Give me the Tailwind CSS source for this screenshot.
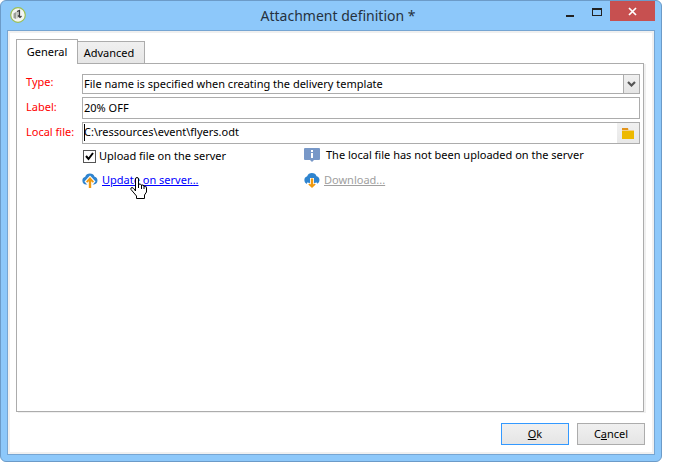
<!DOCTYPE html>
<html lang="en">
<head>
    <meta charset="UTF-8">
    <meta name="viewport" content="width=device-width, initial-scale=1.0">
    <title>Attachment definition</title>
    <script src="https://cdn.jsdelivr.net/npm/@tailwindcss/browser@4"></script>
</head>
<body class="flex flex-col min-h-screen bg-white pr-[18px] pb-[14px] font-['Noto_Sans',sans-serif] text-[11px] leading-4 text-black">
    <!-- Window -->
    <div class="flex flex-1 flex-col rounded-md border border-[#6c9bc8] bg-[#8dc8fa] px-[6px] pb-[6px]">
        <!-- Title bar -->
        <header class="relative flex h-[29px] items-start justify-between">
            <svg class="mt-[6px] ml-[3px] size-4" viewBox="0 0 16 16">
                <circle cx="8" cy="8" r="7.3" fill="#f4f6f2" stroke="#9cbf52" stroke-width="1.2"/>
                <path d="M3.500 6.500 6 5V12L3.500 11Z" fill="#9b9f98"/>
                <path d="M6 5 9 3.500V10L6.500 12Z" fill="#c3c6c0"/>
                <path d="M7 4.500 9.500 3.500V9.500M8 8.500 10 10.500 11.500 9" fill="none" stroke="#3c3c3c" stroke-width="1.200"/>
            </svg>
            <h1 class="absolute inset-x-0 top-[3px] pl-[14px] text-center text-[14px] leading-6 text-[#26323e]">Attachment definition *</h1>
            <div class="relative flex">
                <button aria-label="Minimize" class="flex h-5 w-[26px] items-center justify-center">
                    <svg class="size-[11px]" viewBox="0 0 11 11"><path d="M1 9h8v2H1z" fill="#222"/></svg>
                </button>
                <button aria-label="Maximize" class="flex h-5 w-[27px] items-center justify-center">
                    <svg class="size-[11px]" viewBox="0 0 11 11"><path d="M1 2h10v8H1zM2 4v5h8V4z" fill="#222" fill-rule="evenodd"/></svg>
                </button>
                <button aria-label="Close" class="flex h-5 w-[45px] items-center justify-center bg-[#c75050]">
                    <svg class="size-[9px]" viewBox="0 0 9 9"><path d="M1 1 8 8M8 1 1 8" stroke="#fff" stroke-width="1.700"/></svg>
                </button>
            </div>
        </header>

        <!-- Client area -->
        <main class="flex flex-1 flex-col border border-[#76a5d2] bg-white">
            <div class="flex flex-1 flex-col border-2 border-[#f0f0f0] pt-[6px] pr-[7px] pb-[7px] pl-[6px]">
                <!-- Tabs -->
                <div role="tablist" class="flex items-end">
                    <button role="tab" aria-selected="true" class="relative z-10 -mb-px h-[25px] w-[62px] border border-b-0 border-[#acacac] bg-white">General</button>
                    <button role="tab" aria-selected="false" class="-ml-px h-[22px] w-[68px] border border-b-0 border-[#acacac] bg-linear-to-b from-[#f0f0f0] to-[#e6e6e6] pr-1">Advanced</button>
                </div>

                <!-- Panel -->
                <div role="tabpanel" class="mr-px flex-1 border border-[#acacac] pt-[10px] pr-[3px] pl-[9px] shadow-[2px_1px_0_#f0f0f0]">
                    <form class="grid grid-cols-[56px_1fr] gap-y-[3px]">
                        <label for="type" class="whitespace-nowrap text-[#f00]">Type:</label>
                        <div class="relative">
                            <select id="type" class="block h-5 w-full appearance-none border border-[#acacac] bg-white px-px">
                                <option>File name is specified when creating the delivery template</option>
                            </select>
                            <span class="pointer-events-none absolute inset-y-0 right-0 flex w-[17px] items-center justify-center border border-[#acacac] bg-linear-to-b from-[#f0f0f0] to-[#e5e5e5]">
                                <svg class="h-[6px] w-[9px]" viewBox="0 0 9 6"><path d="M1 1 4.500 4.500 8 1" fill="none" stroke="#555" stroke-width="2.200"/></svg>
                            </span>
                        </div>

                        <label for="label" class="pt-[2px] whitespace-nowrap text-[#f00]">Label:</label>
                        <input id="label" type="text" value="20% OFF" class="h-[22px] w-full border border-[#acacac] px-px pb-[2px]">

                        <label for="file" class="pt-[2px] whitespace-nowrap text-[#f00]">Local file:</label>
                        <div class="relative flex h-[22px] border border-[#acacac]">
                            <input id="file" type="text" value="C:\ressources\event\flyers.odt" class="min-w-0 flex-1 px-px pb-[2px] outline-none">
                            <span class="absolute top-[1px] left-[1px] h-[17px] w-px bg-black"></span>
                            <button type="button" aria-label="Browse" class="flex w-[22px] items-center justify-center bg-linear-to-b from-[#f0f0f0] to-[#e8e8e8]">
                                <svg class="h-[11px] w-3" viewBox="0 0 12 11">
                                    <path d="M0 0h6l1 2h5v2H0z" fill="#f3d08a"/>
                                    <path d="M0 0h6v2H0z" fill="#e2941c"/>
                                    <path d="M0 3h12v8H0z" fill="#edb900"/>
                                </svg>
                            </button>
                        </div>

                        <div class="col-start-2 grid grid-cols-[222px_1fr] gap-y-2">
                            <label class="flex items-center gap-[3px] pt-px pl-px">
                                <span class="relative flex">
                                    <input type="checkbox" checked class="size-[13px] appearance-none border border-[#555] bg-white">
                                    <svg class="pointer-events-none absolute inset-0 size-[13px]" viewBox="0 0 13 13"><path d="M3 6 5.500 9 10 3" fill="none" stroke="#000" stroke-width="2"/></svg>
                                </span>
                                Upload file on the server
                            </label>
                            <div class="flex h-4 items-center gap-[6px]">
                                <svg class="h-[14px] w-4" viewBox="0 0 16 14">
                                    <path d="M1 0h14q1 0 1 1v10q0 1-1 1H10L8 14 6 12H1Q0 12 0 11V1Q0 0 1 0Z" fill="#7898c8"/>
                                    <path d="M7 2h2v2H7zM7 5h2v5H7z" fill="#fff"/>
                                </svg>
                                The local file has not been uploaded on the server
                            </div>
                            <div class="relative flex h-4 items-center gap-1">
                                <svg class="size-4" viewBox="0 0 16 16">
                                    <path d="M4 12.500A4 4 0 0 1 3.200 4.700 5 5 0 0 1 12.600 4.700 4 4 0 0 1 12 12.500Z" fill="#2f84cf"/>
                                    <path d="M8 3.500 13.500 9.500 10.500 13H5.500L2.500 9.500Z" fill="#fff"/>
                                    <path d="M8 5 12 9.500 10.800 10.700 9.200 9.200V16H6.800V9.200L5.200 10.700 4 9.500Z" fill="#f09a10"/>
                                </svg>
                                <a href="#" class="text-[#00f] underline">Update on server...</a>
                                <!-- Hand pointer -->
                                <svg class="pointer-events-none absolute top-[5px] left-[48px] h-[22px] w-[17px]" viewBox="0 0 17 22">
                                    <path d="M5.500 14V2Q5.500.5 7 .5T8.500 2V7.500Q10.500 6 11.500 8.200 13.500 7.200 14 9.200 16.500 8.500 16.500 11V15L14.500 18V21.500H6.500V19L1 12.500Q.3 10.800 2 10.500 3.500 10.500 5.500 14ZM8.500 7V11M11.500 8V12M14 9V12" fill="#fff" stroke="#000"/>
                                </svg>
                            </div>
                            <div class="flex h-4 items-center gap-1">
                                <svg class="size-4" viewBox="0 0 16 16">
                                    <path d="M4 12A4 4 0 0 1 3.200 4.200 5 5 0 0 1 12.600 4.200 4 4 0 0 1 12 12Z" fill="#2f84cf"/>
                                    <path d="M6 6H10V11L13 10.500V13H3V10.500L6 11Z" fill="#fff"/>
                                    <path d="M6.800 6.500H9.200V12.500L10.500 11.500 11.700 12.500 8 16 4.300 12.500 5.500 11.500 6.800 12.500Z" fill="#f09a10"/>
                                </svg>
                                <a href="#" aria-disabled="true" class="text-[#a0a0a0] underline">Download...</a>
                            </div>
                        </div>
                    </form>
                </div>

                <!-- Actions -->
                <footer class="mt-[11px] flex justify-end gap-2">
                    <button class="h-[22px] w-[68px] border border-[#3399ff] bg-linear-to-b from-[#f0f0f0] to-[#e5e5e5]"><u>O</u>k</button>
                    <button class="h-[22px] w-[68px] border border-[#acacac] bg-linear-to-b from-[#f0f0f0] to-[#e5e5e5]">C<u>a</u>ncel</button>
                </footer>
            </div>
        </main>
    </div>
</body>
</html>
